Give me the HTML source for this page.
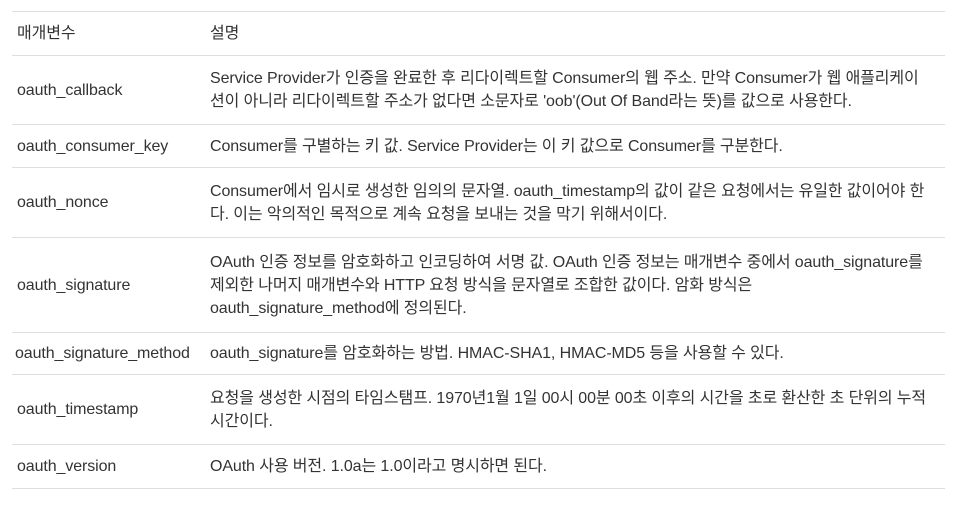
<html><head><style>
body{margin:0;background:#fff;font-family:"Liberation Sans","Noto Sans CJK KR",sans-serif;font-size:14px;color:#333;}
table{position:absolute;left:12px;top:11px;width:933px;border-collapse:collapse;border-top:1px solid #ddd;}
td{border-bottom:1px solid #ddd;padding:0 0 0 5px;vertical-align:middle;line-height:23px;letter-spacing:-0.1px;}
td.k{width:188px;}
</style></head><body>
<table>
<tr style="height:44px"><td class="k">매개변수</td><td>설명</td></tr>
<tr style="height:69px"><td class="k">oauth_callback</td><td>Service Provider가 인증을 완료한 후 리다이렉트할 Consumer의 웹 주소. 만약 Consumer가 웹 애플리케이<br>션이 아니라 리다이렉트할 주소가 없다면 소문자로 'oob'(Out Of Band라는 뜻)를 값으로 사용한다.</td></tr>
<tr style="height:43px"><td class="k">oauth_consumer_key</td><td>Consumer를 구별하는 키 값. Service Provider는 이 키 값으로 Consumer를 구분한다.</td></tr>
<tr style="height:70px"><td class="k">oauth_nonce</td><td>Consumer에서 임시로 생성한 임의의 문자열. oauth_timestamp의 값이 같은 요청에서는 유일한 값이어야 한<br>다. 이는 악의적인 목적으로 계속 요청을 보내는 것을 막기 위해서이다.</td></tr>
<tr style="height:95px"><td class="k">oauth_signature</td><td>OAuth 인증 정보를 암호화하고 인코딩하여 서명 값. OAuth 인증 정보는 매개변수 중에서 oauth_signature를<br>제외한 나머지 매개변수와 HTTP 요청 방식을 문자열로 조합한 값이다. 암화 방식은<br>oauth_signature_method에 정의된다.</td></tr>
<tr style="height:42px"><td class="k" style="padding-left:3px">oauth_signature_method</td><td>oauth_signature를 암호화하는 방법. HMAC-SHA1, HMAC-MD5 등을 사용할 수 있다.</td></tr>
<tr style="height:70px"><td class="k">oauth_timestamp</td><td>요청을 생성한 시점의 타임스탬프. 1970년1월 1일 00시 00분 00초 이후의 시간을 초로 환산한 초 단위의 누적<br>시간이다.</td></tr>
<tr style="height:44px"><td class="k">oauth_version</td><td>OAuth 사용 버전. 1.0a는 1.0이라고 명시하면 된다.</td></tr>
</table>
</body></html>
